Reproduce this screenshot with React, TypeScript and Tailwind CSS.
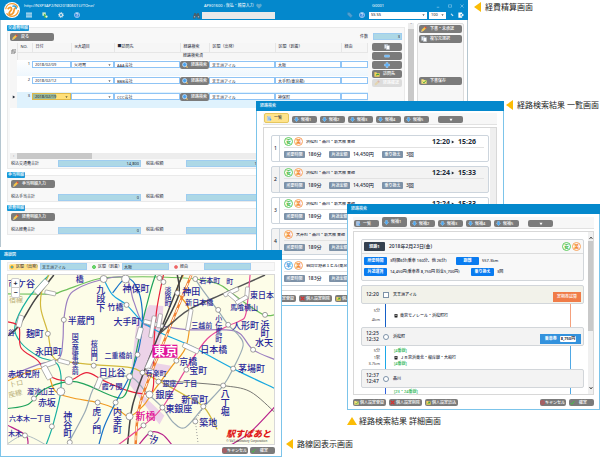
import { useId, type ReactNode } from 'react';

type Point = [number, number];

/* ---------- icons ---------- */

const icons: Record<string, ReactNode> = {
  pencil: (
    <>
      <path d="M1 15l1.500-5.500L10 2l4 4-7.500 7.500z" fill="#f6c64a" />
      <path d="M9 3l2.500-2.500 4 4L13 7z" fill="#e2503a" />
      <path d="M1 15l1-3 2 2z" fill="#fff" />
    </>
  ),
  search: (
    <>
      <path d="M10 10l5 5" stroke="#f0c060" strokeWidth="3" />
      <circle cx="7" cy="7" r="5.500" fill="#4aa3f0" stroke="#cfe8ff" strokeWidth="2" />
    </>
  ),
  copy: (
    <>
      <rect x="1" y="1" width="9" height="11" fill="#dfe6ee" stroke="#9aa7b5" />
      <rect x="6" y="4" width="9" height="11" fill="#fff" stroke="#9aa7b5" />
    </>
  ),
  sheets: (
    <>
      <path d="M5 1h10v10H5z" fill="#fff" stroke="#555" strokeWidth="1.500" />
      <path d="M1 5h10v10H1z" fill="#fff" stroke="#555" strokeWidth="1.500" />
      <path d="M3 8h6M3 11h6" stroke="#555" strokeWidth="1.500" />
    </>
  ),
  minus: <rect x="1" y="5" width="14" height="6" rx="1" fill="#6db7f5" stroke="#d5ecff" />,
  plus: <path d="M5.500 1h5v4.500H15v5h-4.500V15h-5v-4.500H1v-5h4.500z" fill="#5aaef5" stroke="#d5ecff" />,
  folder: (
    <>
      <path d="M1 3h5l2 2h7v10H1z" fill="#f3d35c" />
      <path d="M5 13c0-4 2-6 5-6V5l4 4-4 3v-2c-2 0-3 1-5 3z" fill="#2f9e3a" />
    </>
  ),
  save: (
    <>
      <path d="M1 3h5l2 2h7v10H1z" fill="#f7e27a" />
      <path d="M5 10l3 3 6-7" fill="none" stroke="#3aa63a" strokeWidth="2.500" />
    </>
  ),
  remove: <path d="M2 2l12 12M14 2L2 14" stroke="#e02a2a" strokeWidth="3.500" />,
  cancel: (
    <>
      <circle cx="8" cy="8" r="6" fill="none" stroke="#d8404a" strokeWidth="2.500" />
      <path d="M4 4l8 8" stroke="#d8404a" strokeWidth="2.500" />
    </>
  ),
  check: <path d="M2 9l4 5 8-11" fill="none" stroke="#43c243" strokeWidth="3" />,
  arrow: <path d="M5 1h6v6h4l-7 8-7-8h4z" fill="#4aa9f5" stroke="#c4e4ff" />,
  list: (
    <>
      <rect x="1" y="1" width="11" height="14" fill="#dcebfb" stroke="#7da7d9" />
      <path d="M3 5h7M3 8h7M3 11h5" stroke="#5b8fd0" strokeWidth="1.500" />
      <circle cx="11" cy="11" r="3" fill="#4aa3f0" />
    </>
  ),
  down: <path d="M2 3h12l-6 10z" fill="#fff" />,
  right: <path d="M3 2l10 6-10 6z" fill="#222b38" />,
  caret: <path d="M2 5h12l-6 7z" fill="#222" />,
  menu: <path d="M0 3h16M0 8h16M0 13h16" stroke="#fff" strokeWidth="2.500" />,
  docs: (
    <>
      <path d="M1 1h9v9H1z" fill="#cfeccb" />
      <path d="M5 4l5 4 5 7H6z" fill="#4fb84a" />
      <circle cx="12" cy="12" r="3" fill="#e9f7e6" />
    </>
  ),
  gear: (
    <>
      <circle cx="8" cy="8" r="6.500" fill="none" stroke="#dfe6ea" strokeWidth="2.500" strokeDasharray="3 2" />
      <circle cx="8" cy="8" r="4" fill="none" stroke="#e9eef1" strokeWidth="3" />
    </>
  ),
  help: (
    <>
      <circle cx="8" cy="8" r="7" fill="#3a8be0" stroke="#d6e9fb" strokeWidth="1.500" />
      <path d="M5.500 6c0-3.500 5-3.500 5 0 0 2-2.500 2-2.500 4M8 11.500v2" fill="none" stroke="#fff" strokeWidth="2" />
    </>
  ),
  binoculars: (
    <>
      <path d="M3 2h3l1.500 3h1L10 2h3l3 9v4h-6v-4H6v4H0v-4z" fill="#47606e" />
      <path d="M2 11h3M11 11h3" stroke="#c9d8e0" strokeWidth="2" />
    </>
  ),
  tag: <path d="M1 1h6l8 9-5 5-9-8z" fill="#4f9fd0" stroke="#2d7fb5" />,
  percent: (
    <>
      <path d="M2 4l5-2 7 8-4 3z" fill="#cfe6f7" />
      <path d="M3 12l9-9" stroke="#3d7fb0" />
    </>
  ),
  exit: (
    <>
      <path d="M1 1h10v4H7v6h4v4H1z" fill="#fff" />
      <path d="M8 7h3V4l5 4-5 4V9H8z" fill="#fff" />
    </>
  ),
  heart: <path d="M8 15L1 8C-1 3 5-1 8 4c3-5 9-1 7 4z" fill="#5ba9cf" />,
  minimize: <path d="M3 13h10" stroke="#bfe3f7" strokeWidth="2" />,
  maximize: <path d="M2 3h12v10H2z" fill="none" stroke="#9fd4f0" strokeWidth="2" />,
  close: <path d="M2 2l12 12M14 2L2 14" stroke="#bfe3f7" strokeWidth="2" />,
  train: (
    <>
      <rect x="2" y="0" width="12" height="13" rx="2" fill="#222" />
      <path d="M4 3h8v4H4z" fill="#aaa" />
      <path d="M3 16l2-3h6l2 3" stroke="#222" strokeWidth="1.500" fill="none" />
    </>
  ),
};

const Icon = ({ name, className = 'size-1.5' }: { name: string; className?: string }) => (
  <svg viewBox="0 0 16 16" className={`shrink-0 ${className}`} aria-hidden="true">
    {icons[name]}
  </svg>
);

/* ---------- shared controls ---------- */

interface BtnProps {
  icon?: string;
  children?: ReactNode;
  className?: string;
  label?: string;
  disabled?: boolean;
}

const Btn = ({ icon, children, className = '', label, disabled }: BtnProps) => (
  <button
    type="button"
    aria-label={label}
    disabled={disabled}
    className={`flex h-2 items-center gap-[3px] whitespace-nowrap rounded-[2px] px-0.5 font-medium text-white ${className} ${disabled ? 'bg-[#dcdcdc]' : 'bg-[#7b7b7b]'}`}
  >
    {icon && <Icon name={icon} className={disabled ? 'size-1.5 opacity-30' : 'size-1.5'} />}
    {children}
  </button>
);

const SmallBtn = ({ icon, children, className }: { icon: string; children: ReactNode; className: string }) => (
  <button
    type="button"
    className={`flex h-[7px] items-center whitespace-nowrap rounded-[2px] bg-[#7b7b7b] font-medium text-white ${className}`}
  >
    <Icon name={icon} className="size-[5px]" />
    {children}
  </button>
);

const Total = ({ label, value, className = 'w-[47px]' }: { label: string; value: string; className?: string }) => {
  const id = useId();
  return (
    <>
      <label htmlFor={id} className={`shrink-0 whitespace-nowrap ${className}`}>{label}</label>
      <input
        id={id}
        readOnly
        defaultValue={value}
        className="h-[7px] w-[83px] shrink-0 border border-[#9fcdf0] bg-[#add8e6] px-px text-right outline-none"
      />
    </>
  );
};

const Select = ({ value, label, className = '' }: { value: string; label: string; className?: string }) => (
  <div className={`relative ${className}`}>
    <select aria-label={label} className="block h-full w-full appearance-none bg-transparent px-0.5 outline-none">
      <option>{value}</option>
    </select>
    <Icon name="caret" className="pointer-events-none absolute right-0.5 top-1/2 size-[3px] -translate-y-1/2" />
  </div>
);

const Window = ({ title, className, children }: { title: string; className: string; children: ReactNode }) => (
  <section className={`absolute z-20 flex flex-col border border-[#7cc4ea] bg-white ${className}`}>
    <h2 className="-mx-px -mt-px flex h-2.5 shrink-0 items-center bg-[#0488cc] px-1 font-medium text-white">{title}</h2>
    {children}
  </section>
);

const marks = {
  安: 'border-[#5ecb5e] text-[#3cb93c]',
  楽: 'border-[#f7a35c] text-[#f28a35]',
  早: 'border-[#5aaee8] text-[#2f93dc]',
};
type MarkName = keyof typeof marks;

const Mark = ({ name }: { name: MarkName }) => (
  <span className={`flex size-[9px] items-center justify-center rounded-full border bg-white text-[5px] font-bold ${marks[name]}`}>
    {name}
  </span>
);

const Tabs = ({ active }: { active: number }) => (
  <div className="flex h-3 shrink-0 items-end gap-[3px] border-b border-[#e2e2e2] bg-[#f7f7f7] px-px pb-px">
    {['一覧', '候補1', '候補2', '候補3', '候補4', '候補5'].map((tab, i) => (
      <button
        key={tab}
        type="button"
        className={`flex w-[25px] items-center gap-0.5 whitespace-nowrap rounded-[2px] px-0.5 font-medium ${
          i === active ? 'h-2.5' : 'h-[7px]'
        } ${i === 0 && active === 0 ? 'border border-[#e5c65e] bg-[#ffe38a] text-gray-800' : 'bg-[#7b7b7b] text-white'}`}
      >
        <Icon name={i === 0 ? 'list' : 'arrow'} className="size-[5px]" />
        {tab}
      </button>
    ))}
    <button type="button" aria-label="その他" className="ml-1.5 flex h-[7px] w-[25px] items-center justify-center rounded-[2px] bg-[#7b7b7b]">
      <Icon name="down" className="size-1" />
    </button>
  </div>
);

const CancelOk = () => (
  <>
    <SmallBtn icon="cancel" className="w-[26px]">キャンセル</SmallBtn>
    <SmallBtn icon="check" className="w-[25px] gap-1 px-px">確定</SmallBtn>
  </>
);

const WindowFooter = () => (
  <div className="flex shrink-0 gap-[3px] pt-1">
    <SmallBtn icon="save" className="w-[33px] gap-px px-px">個人設定登録</SmallBtn>
    <SmallBtn icon="remove" className="w-[33px] gap-px px-px">個人設定削除</SmallBtn>
    <SmallBtn icon="folder" className="w-[33px] gap-px px-px">個人設定読込</SmallBtn>
    <div className="flex-1" />
    <CancelOk />
  </div>
);

/* ---------- expense window ---------- */

const expenses = [
  { no: 1, date: '2018/02/09', item: '交通費', visit: 'AAA会社', from: '天王洲アイル', to: '大阪' },
  { no: 2, date: '2018/02/12', item: '', visit: 'BBB会社', from: '天王洲アイル', to: '大手町(東京都)' },
  { no: 3, date: '2018/02/19', item: '', visit: 'CCC会社', from: '天王洲アイル', to: '神保町' },
];

const cell = 'block h-[7px] w-full border border-[#8fc4f5] bg-white px-0.5 outline-none';

const ExpenseTable = () => (
  <table className="w-full table-fixed border-collapse">
    <colgroup>
      <col className="w-[7px]" />
      <col className="w-[15px]" />
      <col className="w-[39px]" />
      <col className="w-[43px]" />
      <col className="w-[66px]" />
      <col className="w-[29px]" />
      <col className="w-[66px]" />
      <col className="w-[66px]" />
      <col />
    </colgroup>
    <thead className="bg-[#f6f6f6] text-left">
      <tr className="h-[9px] *:border-r *:border-[#e6e6e6] *:p-0 *:pl-[3px] *:font-normal">
        <th rowSpan={2} className="!pl-px"><Icon name="sheets" className="size-[5px]" /></th>
        <th>NO.</th>
        <th>日付</th>
        <th>※大項目</th>
        <th>■訪問先</th>
        <th>経路検索</th>
        <th>区間（出発）</th>
        <th>区間（到着）</th>
        <th>経由</th>
      </tr>
      <tr className="h-2 *:border-t *:border-[#e6e6e6] *:p-0 *:pl-[3px] *:font-normal">
        <th colSpan={4} />
        <th>経路検索済</th>
        <th colSpan={3} />
      </tr>
    </thead>
    <tbody>
      {expenses.map((row) => {
        const current = row.no === 3;
        return (
          <tr
            key={row.no}
            className={`h-4 *:p-0 *:pt-px *:align-top ${current ? 'bg-[#dff2fd]' : row.no === 2 ? 'bg-white' : 'bg-linear-to-b from-white to-[#eef7fd]'}`}
          >
            <td className="bg-[#f6f6f6]">{current && <Icon name="right" className="mt-0.5 ml-0.5 size-1" />}</td>
            <td className="!pt-0.5 text-right"><span className="mr-0.5">{row.no}</span></td>
            <td>
              {current ? (
                <Select
                  label="日付"
                  value={row.date}
                  className="h-[7px] w-full border border-[#e0b94a] bg-[linear-gradient(90deg,#9dbb9c_62%,#ffe07a_62%)]"
                />
              ) : (
                <input aria-label="日付" defaultValue={row.date} className={cell} />
              )}
            </td>
            <td><Select label="大項目" value={row.item} className="h-[7px] w-full border border-[#8fc4f5] bg-white" /></td>
            <td><input aria-label="訪問先" defaultValue={row.visit} className={cell} /></td>
            <td><Btn icon="search" className="w-full">経路検索</Btn></td>
            <td><input aria-label="出発" defaultValue={row.from} className={cell} /></td>
            <td><input aria-label="到着" defaultValue={row.to} className={cell} /></td>
            <td><input aria-label="経由" className={cell} /></td>
          </tr>
        );
      })}
    </tbody>
  </table>
);

const Legend = ({ children }: { children: ReactNode }) => (
  <h3 className="relative z-10 flex h-1.5 w-fit items-center rounded-[1px] bg-[#1597d8] px-px font-medium text-white">{children}</h3>
);

const ExpenseHeader = () => (
  <header className="flex h-5 bg-[#0488cc] pl-1 text-white">
    <svg viewBox="0 0 34 34" className="mt-0.5 mr-1 size-4 shrink-0" aria-label="logo">
      <circle cx="17" cy="17" r="17" fill="#fff" />
      <circle cx="17" cy="17" r="13.500" fill="none" stroke="#f39a2d" strokeWidth="2.500" strokeDasharray="34 9" />
      <path d="M9 14c3-4 7-3 7 1s-5 5-5 9 5 4 8 0 1-8 5-11" fill="none" stroke="#f39a2d" strokeWidth="4" strokeLinecap="round" />
      <path d="M19 9c4-2 8 1 7 5" fill="none" stroke="#2d9fd8" strokeWidth="3" strokeLinecap="round" />
    </svg>
    <div className="flex flex-1 flex-col">
      <div className="flex h-2.5 items-center pt-0.5">
        <span className="w-[180px]">http://NXP3AP2/NX20180601U/TOne/</span>
        <span className="flex w-[168px] items-center gap-0.5">APE01600 : 仮払・精算入力<Icon name="heart" /></span>
        <span className="flex-1">G0001</span>
        <span className="flex gap-2 pr-1">
          <Icon name="minimize" className="size-1" />
          <Icon name="maximize" className="size-1" />
          <Icon name="close" className="size-1" />
        </span>
      </div>
      <div className="flex h-2.5 items-center pl-0.5">
        <div className="flex w-[167px] gap-1.5">
          <Icon name="menu" className="mr-1 size-1.5" />
          <Icon name="docs" />
          <Icon name="gear" className="mx-1 size-1.5" />
          <Icon name="help" />
        </div>
        <Icon name="binoculars" className="mr-0.5 size-[7px]" />
        <input aria-label="検索" className="h-[7px] w-[73px] bg-[#e9e9e9] outline-none" />
        <div className="flex flex-1 justify-end gap-1.5 pr-1">
          <Icon name="tag" />
          <Icon name="help" />
        </div>
        <Select label="ユーザー" value="SS SS" className="mr-0.5 h-[7px] w-[58px] bg-white text-gray-900" />
        <Select label="倍率" value="100" className="mr-1 h-[7px] w-[17px] bg-white text-gray-900" />
        <Icon name="percent" className="mr-1 size-1" />
        <Icon name="exit" className="mr-1 size-1.5" />
      </div>
    </div>
  </header>
);

const SubTotal = ({ title, button, label }: { title: string; button: string; label: string }) => (
  <section className="mt-[3px]">
    <Legend>{title}</Legend>
    <div className="-mt-[3px] border border-[#eaeaea] bg-[#f8f8f8] px-[3px] pt-1">
      <Btn icon="pencil" className="w-11">{button}</Btn>
      <div className="mt-[5px] flex h-2 items-center">
        <Total label={label} value="0" />
        <Total label="税抜/税額" value="0" className="w-[45px] pl-[5px]" />
      </div>
    </div>
  </section>
);

const ExpenseWindow = () => {
  const countId = useId();
  return (
    <section className="absolute top-0 left-0 w-[468px] border-x border-[#b5c6d0] bg-white">
      <div className="-mx-px">
        <ExpenseHeader />
      </div>
      <div className="flex gap-[3px] pt-[3px] pr-[3px] pl-1.5">
        <div className="flex-1">
          <div className="pt-0.5"><Legend>交通費明細</Legend></div>
          <div className="-mt-1 border border-[#eaeaea] bg-[#f8f8f8] px-0.5 pt-[5px]">
            <div className="flex h-2.5 items-start justify-between">
              <Btn icon="pencil" className="w-11">戻る</Btn>
              <div className="flex items-center">
                <label htmlFor={countId} className="w-[13px]">件数</label>
                <input id={countId} readOnly defaultValue="3" className="h-[7px] w-[29px] border border-[#9fcdf0] bg-[#add8e6] px-px text-right outline-none" />
              </div>
            </div>
            <div className="flex gap-1">
              <div className="flex h-[116px] flex-1 flex-col bg-white">
                <ExpenseTable />
                <div className="mt-auto flex h-1.5 items-center bg-[#ededed] pl-[3px] text-gray-500">
                  <span className="w-1">‹</span>
                  <div className="h-full w-[75px] bg-[#c8c8c8]" />
                </div>
              </div>
              <div className="flex w-[30px] flex-col gap-px">
                <Btn icon="copy" label="コピー" className="justify-center" />
                <Btn icon="minus" label="削除" className="justify-center" />
                <Btn icon="plus" label="追加" className="justify-center" />
                <Btn icon="folder">訪問先</Btn>
                <Btn icon="pencil" disabled>経路確認</Btn>
              </div>
            </div>
            <div className="flex h-[9px] items-center pl-px">
              <Total label="税込交通費合計" value="14,800" />
              <Total label="税抜/税額" value="14,800" className="w-[45px] pl-[5px]" />
            </div>
          </div>
          <SubTotal title="手当明細" button="手当明細入力" label="税込手当合計" />
          <SubTotal title="経費明細" button="経費明細入力" label="税込経費合計" />
        </div>
        <div className="flex w-1.5 flex-col bg-[#c9c9c9]">
          <span className="h-1.5 bg-[#ededed] text-center">ˆ</span>
        </div>
        <aside className="flex w-[47px] flex-col gap-0.5 rounded-[2px] border border-[#ddd] bg-[#f7f7f7] p-px">
          <Btn icon="pencil">下書・未承認</Btn>
          <Btn icon="copy">複写元選択</Btn>
          <Btn icon="save" className="mt-8">下書保存</Btn>
        </aside>
      </div>
      <div className="h-3" />
    </section>
  );
};

/* ---------- route list window ---------- */

const routes: { marks: MarkName[]; name: string; start: string; end: string; time: string }[] = [
  { marks: ['安', '楽'], name: '浜松町・品川・新大阪 乗換', start: '12:20', end: '15:26', time: '186分' },
  { marks: ['安', '楽'], name: '浜松町・品川・新大阪 乗換', start: '12:24', end: '15:33', time: '189分' },
  { marks: ['安', '楽'], name: '浜松町・品川・新大阪 乗換', start: '12:24', end: '15:33', time: '189分' },
  { marks: ['楽'], name: '大井町・品川・新大阪 乗換', start: '12:24', end: '15:33', time: '189分' },
  { marks: ['早', '楽'], name: '羽田空港第１ビル(東京', start: '12:30', end: '15:33', time: '183分' },
];

const Fact = ({ label, value, className }: { label: string; value: string; className: string }) => (
  <div className={`flex items-center gap-[3px] ${className}`}>
    <dt className="flex h-[7px] w-[21px] items-center justify-center rounded-[1px] bg-[#7d92a8] font-medium text-white">{label}</dt>
    <dd className="text-[5px] font-medium">{value}</dd>
  </div>
);

const ListWindow = () => (
  <Window title="経路検索" className="top-[101px] left-[256px] h-[205px] w-[248px]">
    <div className="flex min-h-0 flex-1 flex-col px-1.5 pt-0.5 pb-[3px]">
      <Tabs active={0} />
      <div className="mt-0.5 flex min-h-0 flex-1 gap-px overflow-hidden border border-[#d8d8d8]">
        <ol className="flex flex-1 flex-col gap-1 pt-[7px] pl-[7px]">
          {routes.map((route, i) => (
            <li key={i} className={`flex h-[27px] shrink-0 overflow-hidden rounded-[2px] border border-[#cdd5dd] ${i % 2 ? 'bg-[#f3f3f3]' : 'bg-white'}`}>
              <span className="flex w-2 shrink-0 items-center justify-center border-r border-[#cdd5dd] text-[5px] font-medium">{i + 1}</span>
              <div className="flex min-w-0 flex-1 flex-col px-1">
                <div className="flex h-3 items-center gap-px border-b border-[#e2e2e2]">
                  {route.marks.map((mark) => <Mark key={mark} name={mark} />)}
                  <span className="ml-0.5 flex-1 truncate font-medium">{route.name}</span>
                  <span className="flex items-center gap-px pr-2 text-[7px] font-bold text-[#222b38]">
                    {route.start}
                    <Icon name="right" className="mr-0.5 size-1" />
                    {route.end}
                  </span>
                </div>
                <dl className="flex flex-1 items-center">
                  <Fact label="所要時間" value={route.time} className="w-[45px]" />
                  <Fact label="片道金額" value="14,450円" className="w-[53px]" />
                  <Fact label="乗り換え" value="3回" className="w-10" />
                </dl>
              </div>
            </li>
          ))}
        </ol>
        <div className="w-1.5 bg-[#efefef]" />
      </div>
      <WindowFooter />
    </div>
  </Window>
);

/* ---------- route detail window ---------- */

const Tag = ({ children }: { children: ReactNode }) => (
  <dt className="flex h-2 w-[23px] items-center justify-center rounded-[1px] bg-[#0a7cf0] font-bold text-white">{children}</dt>
);

const Station = ({ times, name, start, children }: { times: string[]; name: string; start?: boolean; children?: ReactNode }) => (
  <div className={`flex h-[19px] shrink-0 items-center rounded-[2px] border border-[#d2d6da] pr-0.5 pl-1 ${start ? 'bg-[#f2f2ea]' : 'bg-[#f3f3f3]'}`}>
    <div className="flex w-[17px] flex-col gap-px text-[5px] font-medium">
      {times.map((time) => <span key={time}>{time}</span>)}
    </div>
    <span className={`mr-1 size-1.5 border border-[#7d92a8] bg-white ${start ? '' : 'rounded-full'}`} />
    <span className="flex-1 font-medium">{name}</span>
    <div className="self-end pb-px">{children}</div>
  </div>
);

const Leg = ({ facts, platform, line, color, fare }: { facts: string[]; platform?: string; line?: string; color: string; fare?: string }) => (
  <div className="flex h-[23px] shrink-0">
    <div className="flex w-[19px] flex-col items-end justify-evenly text-[#444]">
      {facts.map((fact) => <span key={fact}>{fact}</span>)}
    </div>
    <div className={`ml-[5px] w-px ${color}`} />
    <div className={`flex flex-1 flex-col pl-2 ${line ? 'justify-evenly' : 'pt-0.5'}`}>
      {platform && <span className="font-medium text-[#18b34c]">{platform}</span>}
      {line && (
        <span className="flex items-center gap-0.5 font-medium">
          <Icon name="train" className="size-1" />
          {line}
        </span>
      )}
      {platform && line && <span className="font-medium text-[#18b34c]">{platform}</span>}
    </div>
    {fare && <div className={`mr-[13px] w-px ${fare}`} />}
  </div>
);

const DetailWindow = () => (
  <Window title="経路検索" className="top-[204px] left-[347px] h-[206px] w-[253px]">
    <div className="flex min-h-0 flex-1 flex-col px-[5px] pt-[3px] pb-[3px]">
      <Tabs active={1} />
      <div className="mt-0.5 flex min-h-0 flex-1 overflow-hidden border border-[#d8d8d8]">
        <div className="flex flex-1 flex-col pt-[7px] pr-1 pl-[7px]">
          <div className="mb-1 h-[42px] shrink-0 rounded-[2px] border border-[#d2d6da] bg-[#f8f8f8]">
            <div className="flex h-3.5 items-center gap-px border-b border-[#dcdcdc] px-0.5">
              <span className="mr-[3px] flex h-[9px] w-[21px] items-center justify-center rounded-[1px] bg-[#34404f] font-bold text-white">経路1</span>
              <span className="flex-1 text-[5px] font-medium">2018年2月23日(金)</span>
              <Mark name="安" />
              <Mark name="楽" />
            </div>
            <dl className="flex flex-col gap-[3px] px-0.5 pt-[3px] font-medium">
              <div className="flex items-center gap-[3px]">
                <Tag>所要時間</Tag>
                <dd className="w-[63px] whitespace-nowrap">3時間6分(乗車 160分、他 26分)</dd>
                <Tag>距離</Tag>
                <dd>557.3km</dd>
              </div>
              <div className="flex items-center gap-[3px]">
                <Tag>片道運賃</Tag>
                <dd className="w-[78px] whitespace-nowrap">14,450円(乗車券 8,750円 料金5,700円)</dd>
                <Tag>乗り換え</Tag>
                <dd>3回</dd>
              </div>
            </dl>
          </div>
          <Station times={['12:20']} name="天王洲アイル" start>
            <button type="button" className="flex h-2.5 w-7 items-center justify-center bg-[#f07c48] font-medium text-white">定期券試算</button>
          </Station>
          <Leg facts={['5分', '4km']} line="東京モノレール・浜松町行" color="bg-[#1560c8]" fare="bg-[#f5a07c]" />
          <Station times={['12:25', '12:32']} name="浜松町">
            <button type="button" className="flex h-2.5 w-[41px] items-center justify-center gap-[3px] bg-[#3392dd] font-bold text-white">
              乗車券
              <span className="rounded-[1px] bg-white px-px py-px text-gray-800">8,750円</span>
            </button>
          </Station>
          <Leg facts={['5分', '1駅', '3.7km']} platform="[4番線]" line="ＪＲ京浜東北・根岸線・大船行" color="bg-[#1ba8e8]" fare="bg-[#4fa8e5]" />
          <Station times={['12:37', '12:47']} name="品川" />
          <Leg facts={[]} platform="[23・24番線]" color="bg-[#2f62e0]" fare="bg-[#4fa8e5]" />
        </div>
        <div className="flex w-[5px] flex-col items-center bg-[#f0f0f0] pt-1">
          <svg viewBox="0 0 8 8" className="mb-px size-1"><path d="M1 6l3-4 3 4" fill="none" stroke="#555" strokeWidth="2" /></svg>
          <div className="h-[90px] w-full bg-[#c9c9c9]" />
          <svg viewBox="0 0 8 8" className="mt-auto mb-1 size-1"><path d="M1 2l3 4 3-4" fill="none" stroke="#555" strokeWidth="2" /></svg>
        </div>
      </div>
      <WindowFooter />
    </div>
  </Window>
);

/* ---------- route map window ---------- */

// Catmull-Rom spline through the given points
const smooth = (pts: Point[]) =>
  pts.reduce((d, p, i) => {
    if (i === 0) return `M${p[0]} ${p[1]}`;
    const a = pts[i - 2] ?? pts[i - 1];
    const b = pts[i - 1];
    const n = pts[i + 1] ?? p;
    return `${d}C${b[0] + (p[0] - a[0]) / 6} ${b[1] + (p[1] - a[1]) / 6} ${p[0] - (n[0] - b[0]) / 6} ${p[1] - (n[1] - b[1]) / 6} ${p[0]} ${p[1]}`;
  }, '');

const lines: { color: string; width?: number; pts: Point[] }[] = [
  { color: '#6fc05c', pts: [[7, 293], [50, 293], [62, 290], [97, 278], [125, 276], [160, 276], [195, 278], [218, 283], [230, 291], [245, 302], [264, 314], [275, 314]] },
  { color: '#9b7fc0', pts: [[7, 376], [37, 364], [58, 358], [62, 340], [63, 319], [67, 298], [76, 288], [100, 279], [125, 277], [133, 300], [143, 323], [160, 325], [188, 329], [225, 329], [240, 333], [253, 349], [275, 359]] },
  { color: '#18b0a0', pts: [[48, 274], [27, 298], [14, 325], [20, 342], [38, 356], [57, 364], [60, 390], [52, 425], [45, 445]] },
  { color: '#444444', width: 1.5, pts: [[53, 274], [34, 299], [18, 325], [7, 335]] },
  { color: '#d2b93c', pts: [[48, 274], [41, 290], [40, 308], [47, 332], [52, 356], [66, 361], [93, 364], [130, 367], [142, 372], [158, 380], [185, 395], [204, 407], [217, 429]] },
  { color: '#e8203a', pts: [[7, 321], [18, 326], [20, 347], [37, 360], [48, 375], [68, 380], [86, 372], [103, 380], [127, 390], [148, 393], [153, 385], [153, 355], [156, 311], [163, 274]] },
  { color: '#1fa35c', pts: [[7, 408], [27, 404], [43, 389], [68, 381], [85, 384], [113, 396], [124, 395], [131, 375], [140, 330], [150, 290], [155, 274]] },
  { color: '#f09a20', pts: [[7, 380], [42, 368], [54, 390], [70, 397], [97, 402], [117, 409], [129, 416], [143, 405], [152, 392], [172, 365], [186, 345], [189, 310], [177, 290], [183, 274]] },
  { color: '#1673c8', pts: [[112, 292], [126, 277], [138, 290], [142, 320], [137, 354], [128, 378], [115, 402], [104, 425], [98, 445]] },
  { color: '#18a8e0', pts: [[103, 278], [112, 294], [126, 304], [142, 321], [160, 332], [190, 345], [233, 368], [275, 388]] },
  { color: '#9aabb5', pts: [[68, 442], [84, 412], [97, 382], [129, 376], [146, 392], [162, 407], [173, 422], [185, 427], [203, 407], [223, 385], [233, 368], [243, 345], [238, 334], [228, 324], [218, 310], [203, 290], [195, 278]] },
  { color: '#f08030', width: 2.5, pts: [[191, 274], [166, 335], [140, 402], [135, 445]] },
  { color: '#444444', width: 1.5, pts: [[182, 274], [160, 330], [147, 362], [132, 405], [127, 445]] },
  { color: '#444444', width: 1.5, pts: [[177, 274], [178, 295], [160, 332]] },
  { color: '#555555', width: 1.5, pts: [[265, 274], [225, 292], [190, 308], [174, 320], [158, 334]] },
  { color: '#e84a98', pts: [[250, 274], [246, 312], [240, 320], [228, 325], [207, 338], [186, 368], [162, 407], [143, 425], [117, 445]] },
  { color: '#555555', width: 0.8, pts: [[158, 380], [190, 382], [223, 385], [250, 391], [275, 412]] },
  { color: '#b8228c', pts: [[275, 406], [250, 432], [230, 445]] },
  { color: '#b8228c', pts: [[138, 445], [150, 432], [162, 434], [172, 445]] },
  { color: '#b8228c', pts: [[7, 425], [25, 435], [27, 445]] },
  { color: '#9aabb5', width: 0.8, pts: [[7, 443], [24, 435], [46, 445]] },
];

const stations: { at: Point; r?: number }[] = [
  { at: [103, 278], r: 3.5 }, { at: [125, 278], r: 4 }, { at: [126, 304] }, { at: [63, 319] }, { at: [47, 333] },
  { at: [93, 365] }, { at: [137, 354] }, { at: [129, 376], r: 3 }, { at: [68, 380], r: 4 }, { at: [60, 391], r: 4 },
  { at: [33, 398] }, { at: [97, 402] }, { at: [115, 402] }, { at: [129, 416], r: 3.5 }, { at: [51, 426] }, { at: [69, 442] },
  { at: [24, 435] }, { at: [149, 394], r: 3.5 }, { at: [142, 372] }, { at: [159, 277] }, { at: [177, 292] }, { at: [195, 278] },
  { at: [163, 281] }, { at: [218, 309] }, { at: [228, 324] }, { at: [265, 314] }, { at: [253, 349] }, { at: [233, 368] },
  { at: [176, 360] }, { at: [186, 369] }, { at: [158, 381] }, { at: [223, 385] }, { at: [162, 407] }, { at: [203, 406] },
  { at: [195, 421] }, { at: [150, 433] }, { at: [143, 425] },
];

// x, y, width, height, rotation of interchange blocks
const blocks = [
  [32, 283, 17, 6, -48], [44, 290, 11, 4, 12], [13, 318, 12, 5, 105], [40, 361, 15, 5, -20], [39, 369, 14, 6, 62],
  [57, 359, 12, 4, 15], [92, 380, 12, 5, -68], [133, 330, 12, 5, 105], [143, 321, 20, 4, 15], [141, 324, 22, 4, 100],
  [152, 318, 14, 4, 100], [140, 356, 22, 5, -65], [146, 369, 12, 4, 20], [182, 345, 17, 5, 25], [178, 317, 22, 4, 100],
  [223, 289, 16, 4, -25], [227, 294, 12, 4, 40], [241, 290, 12, 4, 95], [235, 297, 13, 4, -30],
];

const labels: { text: string; at: Point; vertical?: boolean; size?: number }[] = [
  { text: '市ケ谷', at: [7, 286] }, { text: '半蔵門', at: [67, 323] }, { text: '麹町', at: [25, 336] }, { text: '永田町', at: [34, 354] },
  { text: '赤坂見附', at: [7, 376], size: 8 }, { text: '溜池山王', at: [26, 393], size: 7 }, { text: '赤坂', at: [37, 405] },
  { text: '六本木一丁目', at: [8, 421], size: 7 }, { text: '木木', at: [7, 436], size: 7 }, { text: '橋', at: [75, 281], size: 8 }, { text: '谷', at: [7, 334], size: 7 },
  { text: '竹橋', at: [107, 309], size: 8 }, { text: '神保町', at: [122, 291] }, { text: '大手町', at: [113, 324] },
  { text: '二重橋前', at: [104, 357], size: 7 }, { text: '日比谷', at: [98, 375] }, { text: '霞ケ関', at: [101, 388], size: 7 },
  { text: '有楽町', at: [145, 375], size: 7 }, { text: '神田', at: [182, 294] }, { text: '新日本橋', at: [185, 304], size: 7 },
  { text: '岩本町', at: [199, 282], size: 7 }, { text: '三越前', at: [191, 327], size: 7 }, { text: '東日本', at: [250, 297], size: 8 },
  { text: '馬喰横山', at: [230, 309], size: 7 }, { text: '人形町', at: [232, 328] }, { text: '水天', at: [255, 345] },
  { text: '日本橋', at: [200, 352] }, { text: '京橋', at: [179, 364] }, { text: '宝町', at: [189, 373] }, { text: '茅場町', at: [238, 371] },
  { text: '銀座一丁目', at: [162, 385], size: 7 }, { text: '銀座', at: [155, 397] }, { text: '新富町', at: [181, 402] },
  { text: '東銀座', at: [165, 412] }, { text: '築地', at: [199, 426] }, { text: '汐', at: [149, 443] },
  { text: '九段下', at: [100, 284], vertical: true }, { text: '国会議事堂前', at: [74, 332], vertical: true, size: 7 },
  { text: '桜田門', at: [93, 339], vertical: true, size: 7 }, { text: '虎ノ門', at: [96, 407], vertical: true }, { text: '内幸町', at: [117, 407], vertical: true },
  { text: '神谷町', at: [67, 411], vertical: true }, { text: '淡路町', at: [167, 285], vertical: true, size: 7 },
  { text: '浜町', at: [265, 319], vertical: true }, { text: '八丁堀', at: [225, 389], vertical: true },
  { text: '小伝馬町', at: [218, 314], vertical: true, size: 7 }, { text: '町', at: [226, 283], size: 7 },
];

const RouteMap = () => (
  <svg viewBox="7 274 267 170" className="block w-full border border-[#d8d8d8] bg-[#fdfde8]">
    <path d="M136 322l13-18 14 1-2 32-8 25 18 3-4 8-18-2-8 22 23 22-5 9-30-40z" fill="#ecd3e8" />
    {lines.map((line, i) => (
      <path key={i} d={smooth(line.pts)} fill="none" stroke={line.color} strokeWidth={line.width ?? 1.2} />
    ))}
    <path d={smooth([[191, 274], [166, 335], [140, 402], [135, 445]])} fill="none" stroke="#fff" strokeWidth="1" strokeDasharray="5 4" />
    <path d="M203 407l-8 13 3 25" fill="none" stroke="#999" strokeDasharray="1 2" />
    {blocks.map(([x, y, w, h, rot], i) => (
      <rect key={i} x={x} y={y} width={w} height={h} rx="1" fill="#fff" stroke="#888" strokeWidth="0.600" transform={`rotate(${rot} ${x + w / 2} ${y + h / 2})`} />
    ))}
    {stations.map(({ at, r = 2.5 }, i) => (
      <circle key={i} cx={at[0]} cy={at[1]} r={r} fill="#fff" stroke="#777" strokeWidth="0.700" />
    ))}
    {labels.map(({ text, at, vertical, size = 9 }) => (
      <text
        key={`${text}${at[0]}`}
        x={at[0]}
        y={at[1]}
        fontSize={size}
        fontWeight="500"
        fill="#28289a"
        className={vertical ? '[writing-mode:vertical-rl]' : ''}
      >
        {text}
      </text>
    ))}
    <g fill="#b9ae78" fontSize="7">
      <text x="8" y="301">宿線</text>
      <text x="9" y="387" transform="rotate(-12 9 387)">トロ</text>
      <text x="8" y="397" transform="rotate(-12 8 397)">座線</text>
    </g>
    <rect x="152" y="344" width="25" height="13" fill="#e0149a" />
    <text x="153" y="355" fontSize="12" fontWeight="700" fill="#fff">東京</text>
    <text x="135" y="420" fontSize="10" fontWeight="500" fill="#e0149a">新橋</text>
    <text x="226" y="437" fontSize="9" fontWeight="900" fontStyle="italic" fill="#e01818">駅すぱあと</text>
    <text x="226" y="442" fontSize="3" fill="#333">© Val Laboratory Corporation</text>
  </svg>
);

const mapPoints = [
  { label: '区間（出発）', value: '天王洲アイル', dot: 'bg-[#19a3d8] border-[#f7b733]', chip: 'bg-[#ffe08a]' },
  { label: '区間（到着）', value: '大阪', dot: 'bg-[#6fe06f] border-[#5cc85c]', chip: '' },
  { label: '経由', value: '', dot: 'bg-[#ef5a5a] border-[#f08080]', chip: '' },
];

const MapWindow = () => (
  <Window title="路線図" className="top-[250px] left-0 h-[207px] w-[282px]">
    <div className="px-1.5 pt-0.5">
      <div className="mb-[3px] flex h-[9px] items-center gap-0.5 border border-[#ececec] bg-[#f8f8f8] px-px">
        {mapPoints.map((point, i) => (
          <div key={point.label} className="flex items-center gap-0.5 pr-0.5">
            <label className={`flex h-1.5 w-[29px] items-center gap-0.5 rounded-[2px] whitespace-nowrap px-px ${point.chip}`}>
              <input type="radio" name="point" defaultChecked={i === 0} className={`size-1 shrink-0 appearance-none rounded-full border ${point.dot}`} />
              {point.label}
            </label>
            <input aria-label={point.label} defaultValue={point.value} className="h-[7px] w-[47px] border border-[#9fcdf0] bg-[#add8e6] px-px outline-none" />
          </div>
        ))}
      </div>
      <div className="relative">
        <RouteMap />
        <div className="absolute top-1 left-1 flex w-[9px] flex-col rounded-[2px] border border-[#ccc] bg-white text-[7px] font-bold">
          <button type="button" className="h-[9px] border-b border-[#ccc]">+</button>
          <button type="button" className="h-[9px]">−</button>
        </div>
      </div>
      <div className="flex justify-end gap-0.5 pt-0.5">
        <CancelOk />
      </div>
    </div>
  </Window>
);

/* ---------- page ---------- */

const Caption = ({ className, up, children }: { className: string; up?: boolean; children: ReactNode }) => (
  <p className={`absolute flex items-center whitespace-nowrap text-[8px] text-[#222] ${up ? 'gap-0.5' : 'gap-1'} ${className}`}>
    <svg viewBox="0 0 10 10" className={up ? 'h-2 w-2.5' : 'h-2.5 w-[7px]'} preserveAspectRatio="none" aria-hidden="true">
      <path d={up ? 'M5 0l5 10H0z' : 'M0 5l10-5v10z'} fill="#fbbc05" />
    </svg>
    {children}
  </p>
);

export default function App() {
  return (
    <main className="relative h-screen overflow-hidden bg-white font-['Noto_Sans','Noto_Sans_CJK_JP',sans-serif] text-[4px] leading-none text-gray-800">
      <ExpenseWindow />
      <ListWindow />
      <DetailWindow />
      <MapWindow />
      <Caption className="top-0.5 left-[474px]">経費精算画面</Caption>
      <Caption className="top-[100px] left-[506px]">経路検索結果 一覧画面</Caption>
      <Caption className="top-[417px] left-[347px]" up>経路検索結果 詳細画面</Caption>
      <Caption className="top-[439px] left-[286px]">路線図表示画面</Caption>
    </main>
  );
}
